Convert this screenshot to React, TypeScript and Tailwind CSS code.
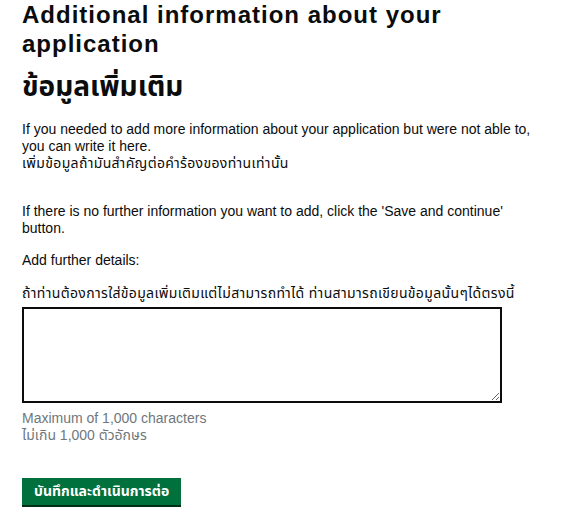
export default function App() {
  return (
    <div
      className="min-h-screen bg-white pl-[22px] text-[#0b0c0c]"
      style={{ fontFamily: '"Liberation Sans", "Noto Sans Thai", "Noto Sans", sans-serif' }}
    >
      <div className="w-[520px]">
        {/* headings */}
        <h1 className="text-[24px] font-bold leading-[29px] tracking-[1px]">
          Additional information about your application
        </h1>
        <h2 className="mt-[14px] text-[28px] font-bold leading-[29px]">ข้อมูลเพิ่มเติม</h2>

        <p className="mt-[20px] text-[14px] leading-[17px]">
          If you needed to add more information about your application but were not able to, you can write it here.
          <br />
          <span className="tracking-[0.35px]">เพิ่มข้อมูลถ้ามันสำคัญต่อคำร้องของท่านเท่านั้น</span>
        </p>

        <p className="mt-[31px] text-[14px] leading-[17px]">
          If there is no further information you want to add, click the 'Save and continue' button.
        </p>

        <p className="mt-[15px] text-[14px] leading-[17px]">Add further details:</p>

        {/* textarea */}
        <label htmlFor="details" className="mt-[16px] block text-[14px] leading-[17px] tracking-[0.35px]">
          ถ้าท่านต้องการใส่ข้อมูลเพิ่มเติมแต่ไม่สามารถทำได้ ท่านสามารถเขียนข้อมูลนั้นๆได้ตรงนี้
        </label>
        <textarea
          id="details"
          className="mt-[5px] block h-[96px] w-[480px] border-2 border-[#0b0c0c] bg-white p-1 text-[14px] outline-none"
        />
        <div className="mt-[7px] text-[14px] leading-[17px] text-[#6f777b]">
          <p>Maximum of 1,000 characters</p>
          <p>ไม่เกิน 1,000 ตัวอักษร</p>
        </div>

        <button
          type="button"
          className="mt-[34px] h-[27px] bg-[#00703c] px-[12px] text-[14px] font-bold leading-[27px] text-white shadow-[0_2px_0_#002d18]"
        >
          บันทึกและดำเนินการต่อ
        </button>
      </div>
    </div>
  );
}
